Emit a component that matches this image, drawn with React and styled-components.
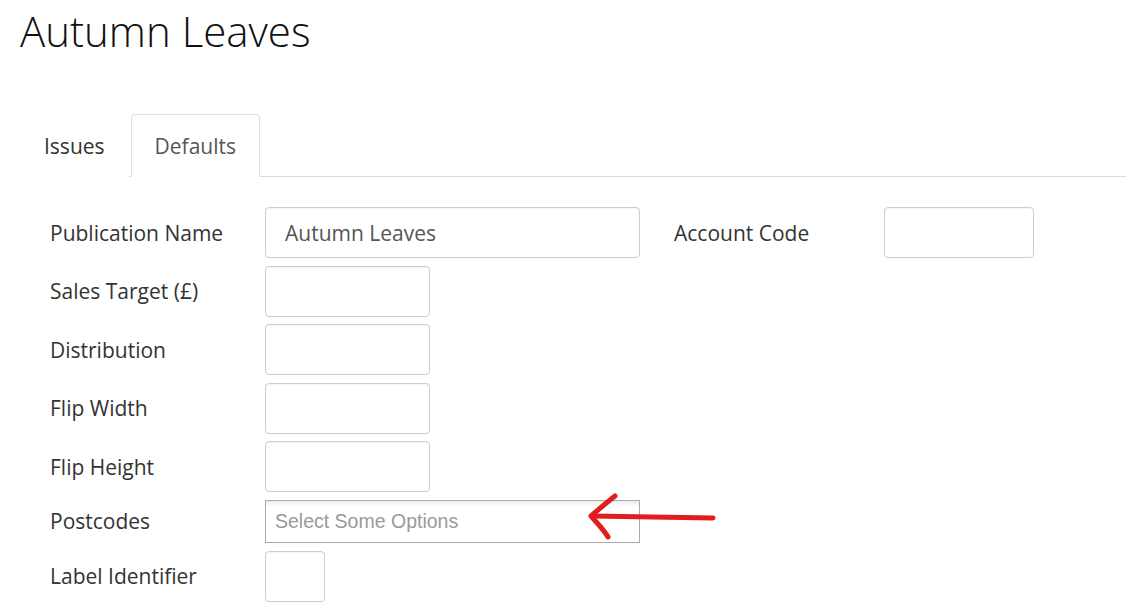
import React from 'react'
import styled, { createGlobalStyle } from 'styled-components'

const GlobalStyle = createGlobalStyle`
	html, body {
		margin: 0;
		background: #fff;
		font-family: "Open Sans", "Noto Sans", sans-serif;
		color: #333;
	}
	* {
		box-sizing: border-box;
	}
`

const Page = styled.div`
	position: relative;
	padding: 10px 0 0 20px;
	width: 1126px;
	height: 607px;
	overflow: hidden;
`

const Title = styled.h1`
	margin: 0;
	font-size: 42px;
	line-height: 1;
	font-weight: 300;
	color: #111;
`

const TabBar = styled.ul`
	display: flex;
	list-style: none;
	margin: 62px 0 0;
	padding: 0;
	border-bottom: 1px solid #ddd;
`

const Tab = styled.li`
	height: 63px;
	margin: 0 2px -1px 0;
	padding: 0 23px;
	display: flex;
	align-items: center;
	font-size: 21px;
	color: ${p => (p.active ? '#555' : '#333')};
	background: #fff;
	border: 1px solid ${p => (p.active ? '#ddd' : 'transparent')};
	border-bottom-color: ${p => (p.active ? '#fff' : 'transparent')};
	border-radius: 4px 4px 0 0;
`

const Form = styled.div`
	display: grid;
	grid-template-columns: 215px 375px 34px 210px 150px;
	row-gap: 7.6px;
	align-items: center;
	padding: 30px 0 0 30px;
`

const Label = styled.label`
	grid-column: ${p => p.col || 1};
	font-size: 21px;
	color: #333;
`

const Input = styled.input`
	grid-column: ${p => p.col || 2};
	justify-self: start;
	width: ${p => p.width}px;
	height: 51px;
	padding: 0 19px;
	border: 1px solid #ccc;
	border-radius: 4px;
	box-shadow: inset 0 1px 1px rgba(0, 0, 0, 0.04);
	font-family: "Open Sans", sans-serif;
	font-size: 21px;
	color: #555;
	outline: none;
`

const ChosenBox = styled.div`
	grid-column: 2;
	height: 43px;
	padding: 0 9px;
	display: flex;
	align-items: center;
	border: 1px solid #aaa;
	background: linear-gradient(#eee 1%, #fff 15%);
	font-family: "Liberation Sans", Arial, sans-serif;
	font-size: 19.5px;
	color: #999;
`

const Arrow = styled.svg`
	position: absolute;
	left: 580px;
	top: 487px;
`

const smallFields = [
	['Sales Target (£)', 165],
	['Distribution', 165],
	['Flip Width', 165],
	['Flip Height', 165],
]

const App = () => {
	return (
		<Page>
			<GlobalStyle />
			<Title>Autumn Leaves</Title>
			<TabBar>
				<Tab>Issues</Tab>
				<Tab active>Defaults</Tab>
			</TabBar>
			<Form>
				<Label>Publication Name</Label>
				<Input width={375} defaultValue='Autumn Leaves' />
				<Label col={4}>Account Code</Label>
				<Input col={5} width={150} />
				{smallFields.map(([label, width]) => (
					<React.Fragment key={label}>
						<Label>{label}</Label>
						<Input width={width} />
					</React.Fragment>
				))}
				<Label>Postcodes</Label>
				<ChosenBox>Select Some Options</ChosenBox>
				<Label>Label Identifier</Label>
				<Input width={60} />
			</Form>
			<Arrow width='140' height='60' viewBox='0 0 140 60'>
				<g fill='none' stroke='#e31b1b' strokeWidth='5' strokeLinecap='round' strokeLinejoin='round'>
					<path d='M12 29 L133 31' />
					<path d='M35 9 C26 16 18 23 11 29 C17 36 24 43 28 50' />
				</g>
			</Arrow>
		</Page>
	)
}

export default App
